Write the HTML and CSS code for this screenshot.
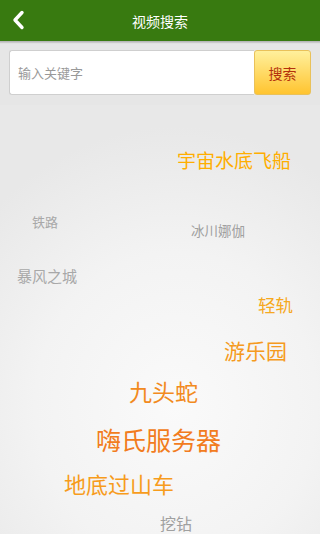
FILE: index.html
```html
<!DOCTYPE html>
<html lang="zh">
<head>
<meta charset="utf-8">
<link rel="stylesheet" href="styles.css">
</head>
<body>
<div class="page">
  <header class="topbar">
    <svg class="back" width="15" height="20" viewBox="0 0 15 20"><path d="M11 2.5 L4 10 L11 17.5" fill="none" stroke="#fff" stroke-width="3.4" stroke-linecap="round" stroke-linejoin="round"/></svg>
    <div class="title">视频搜索</div>
  </header>
  <div class="search">
    <div class="input">输入关键字</div>
    <div class="btn">搜索</div>
  </div>
  <div class="cloud">
    <span class="tag t1">宇宙水底飞船</span>
    <span class="tag t2">铁路</span>
    <span class="tag t3">冰川娜伽</span>
    <span class="tag t4">暴风之城</span>
    <span class="tag t5">轻轨</span>
    <span class="tag t6">游乐园</span>
    <span class="tag t7">九头蛇</span>
    <span class="tag t8">嗨氏服务器</span>
    <span class="tag t9">地底过山车</span>
    <span class="tag t10">挖钻</span>
  </div>
</div>
</body>
</html>
```
FILE: styles.css
```css
* { box-sizing: border-box; margin: 0; padding: 0; }
html, body { width: 320px; height: 534px; overflow: hidden; }
body { font-family: "Noto Sans CJK SC", "Noto Sans", sans-serif; background: #e6e6e6; }
.page { display: flex; flex-direction: column; height: 534px; }
.topbar {
  height: 42px; background: #387a10; position: relative;
  display: flex; align-items: center; justify-content: center;
  border-bottom: 1px solid #b8b8b8;
  box-shadow: 0 1px 1px rgba(0,0,0,0.12);
}
.back { position: absolute; left: 11px; top: 10px; }
.title { color: #fff; font-size: 14px; line-height: 1; }
.search { display: flex; margin: 8px 9px 0 9px; height: 45px; }
.input {
  flex: 1; background: #fff; border: 1px solid #cfcfcf; border-right: none;
  border-radius: 3px 0 0 3px; color: #999; font-size: 13px;
  display: flex; align-items: center; padding-left: 8px;
}
.btn {
  width: 57px; border: 1px solid #e9c15a; border-radius: 3px;
  background: linear-gradient(#fff09c, #ffc430);
  color: #b3300c; font-size: 14px;
  display: flex; align-items: center; justify-content: center;
}
.cloud {
  flex: 1; position: relative;
  background: radial-gradient(ellipse 80% 65% at 55% 70%, #fafafa, #f3f3f3 55%, #e8e8e8 100%);
  margin-top: 10px;
}
.tag { position: absolute; line-height: 1; white-space: nowrap; }
/* cloud top = 105px on the page */
.t1 { left: 177px; top: 45px; font-size: 19px; color: #ffae00; }
.t2 { left: 32px; top: 110px; font-size: 13px; color: #a8a8a8; }
.t3 { left: 191px; top: 119px; font-size: 13.5px; color: #a0a0a0; }
.t4 { left: 17px; top: 163px; font-size: 15px; color: #a8a8a8; }
.t5 { left: 258px; top: 191px; font-size: 17.5px; color: #f6a820; }
.t6 { left: 224px; top: 235px; font-size: 21px; color: #f59a20; }
.t7 { left: 129px; top: 275px; font-size: 23px; color: #f28a20; }
.t8 { left: 96px; top: 322px; font-size: 25px; color: #f27c20; }
.t9 { left: 64px; top: 367px; font-size: 22px; color: #f79c1c; }
.t10 { left: 160px; top: 410px; font-size: 16px; color: #a0a0a0; }
```
